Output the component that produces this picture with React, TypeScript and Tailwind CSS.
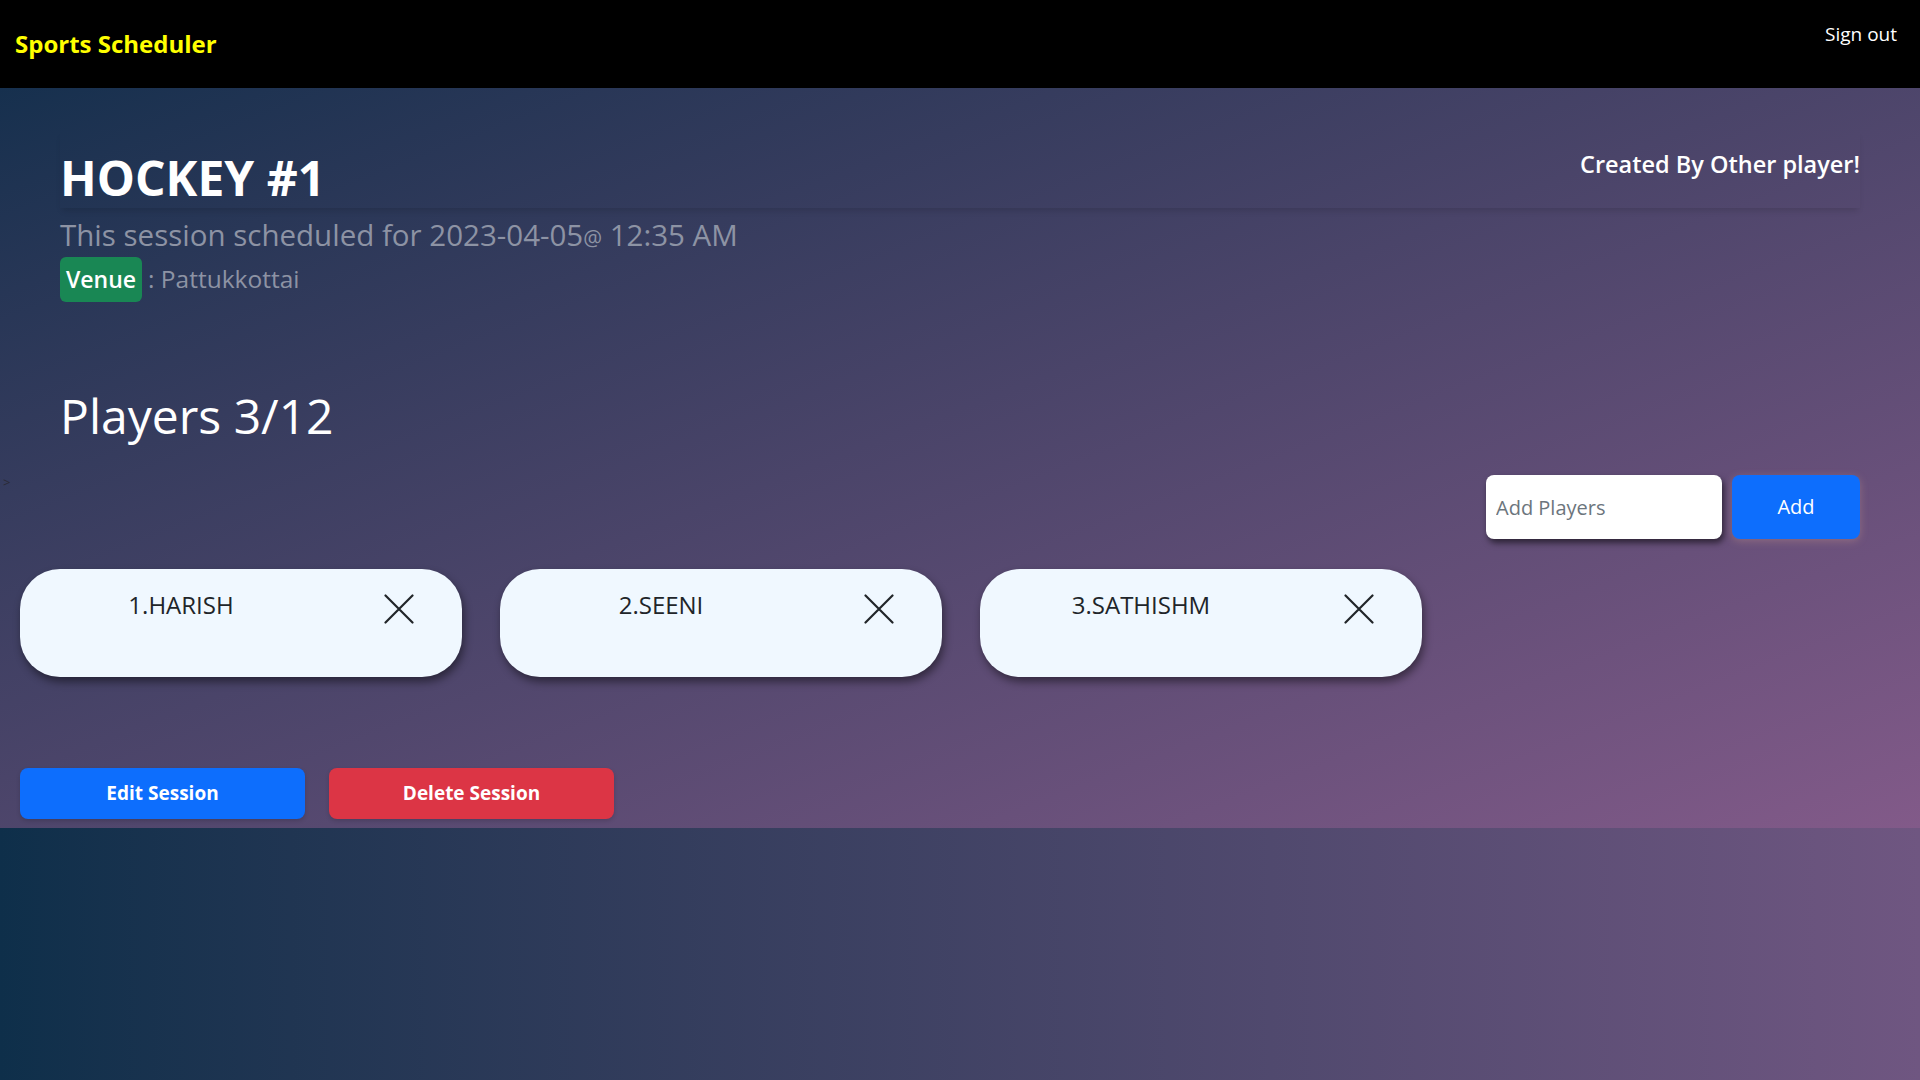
import React from 'react';

const players = ['HARISH', 'SEENI', 'SATHISHM'];

function CloseIcon() {
  return (
    <svg width="30" height="30" viewBox="0 0 30 30" fill="none">
      <path d="M1.5 1.5L28.5 28.5M28.5 1.5L1.5 28.5" stroke="#212529" strokeWidth="2.2" strokeLinecap="round" />
    </svg>
  );
}

function PlayerCard({ index, name }: { index: number; name: string }) {
  return (
    <div className="flex h-[108px] w-[442px] items-start rounded-[40px] bg-[#f0f8ff] pt-[18px] shadow-[2px_5px_8px_rgba(0,0,0,0.45)]">
      <div className="w-[322px] text-center text-[24px] leading-[36px] text-[#212529]">
        {index}.{name}
      </div>
      <button className="ml-[42px] mt-[7px]">
        <CloseIcon />
      </button>
    </div>
  );
}

export default function App() {
  return (
    <div className="min-h-screen bg-linear-to-r from-[#0e2f4a] to-[#6f5681] font-['Open_Sans',sans-serif]">
      {/* Navbar */}
      <nav className="flex h-[88px] justify-between bg-black">
        <a className="self-center pl-[15px] text-[24px] font-bold text-[#ffff00]">Sports Scheduler</a>
        <a className="mr-[23px] mt-[22px] self-start text-[19px] leading-[24px] text-white">Sign out</a>
      </nav>

      {/* Session */}
      <section className="h-[740px] bg-linear-to-br from-[#16304e] to-[#825a89] pt-[42px]">
        <div className="mx-[60px] flex items-start justify-between pt-[18px] shadow-[0_5px_6px_-2px_rgba(0,0,0,0.12)]">
          <h1 className="text-[48px] font-bold leading-[60px] text-white">HOCKEY #1</h1>
          <h4 className="mt-[1px] text-[23.5px] font-semibold leading-[30px] text-white">Created By Other player!</h4>
        </div>

        <div className="mx-[60px] mt-[10px] text-[29.5px] leading-[34px] text-[#8d93a4]">
          This session scheduled for 2023-04-05<span className="text-[21px]">@</span> 12:35 AM
        </div>

        <div className="mx-[60px] mt-[2px] flex items-center text-[24.5px] text-[#8d93a4]">
          <span className="flex h-[45px] items-center rounded-md bg-[#198754] px-[6px] text-[23px] font-semibold text-white">Venue</span>
          <span className="ml-[6px]">: Pattukkottai</span>
        </div>

        <h2 className="mx-[60px] mt-[85px] text-[48px] font-medium leading-[58px] text-white">Players 3/12</h2>

        <div className="mt-[30px] flex items-start justify-between pl-[3px] pr-[60px]">
          <span className="mt-[1px] text-[13px] leading-none text-[#2a2a35]">&gt;</span>
          <div className="flex gap-[10px]">
            <input
              placeholder="Add Players"
              className="h-[64px] w-[236px] rounded-lg bg-white px-[10px] text-[20px] text-[#212529] shadow-[2px_4px_6px_rgba(0,0,0,0.55)] outline-none placeholder:text-[#6c757d]"
            />
            <button className="h-[64px] w-[128px] rounded-lg bg-[#0d6efd] text-[20px] text-white shadow-[0_2px_8px_rgba(255,190,150,0.25)]">
              Add
            </button>
          </div>
        </div>

        <div className="mt-[30px] flex gap-[38px] px-[20px]">
          {players.map((p, i) => (
            <PlayerCard key={p} index={i + 1} name={p} />
          ))}
        </div>

        <div className="mt-[91px] flex gap-[24px] px-[20px]">
          <button className="h-[51px] w-[285px] rounded-lg bg-[#0d6efd] text-[19px] font-bold text-white shadow-[0_2px_4px_rgba(0,0,0,0.15)]">
            Edit Session
          </button>
          <button className="h-[51px] w-[285px] rounded-lg bg-[#dc3545] text-[19px] font-bold text-white shadow-[0_2px_4px_rgba(0,0,0,0.15)]">
            Delete Session
          </button>
        </div>
      </section>
    </div>
  );
}
